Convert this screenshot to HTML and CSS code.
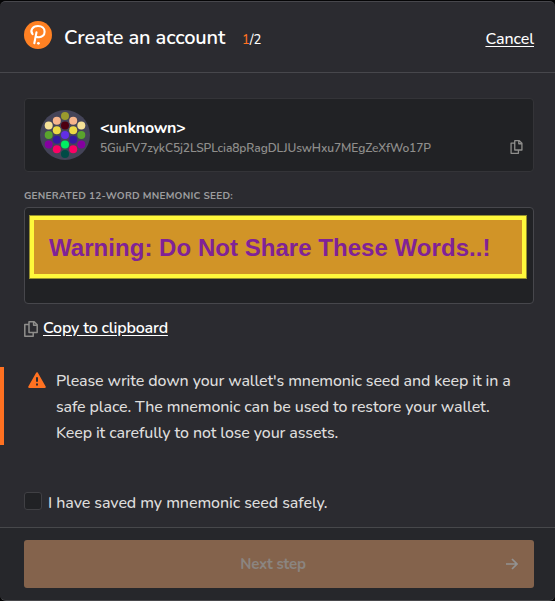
FILE: index.html
```
<!DOCTYPE html>
<html lang="en">
<head>
<meta charset="utf-8">
<title>Create an account</title>
<link rel="stylesheet" href="styles.css">
</head>
<body>
<main class="popup">
  <header class="header">
    <svg class="logo" viewBox="0 0 28 28"><circle cx="14" cy="14" r="14" fill="#ff8123"/><path d="M8.6 13.2C5.6 9.6 8.6 5 14 5c4 0 6.6 2.4 6.6 5.7 0 3.5-2.6 5.7-6 5.5l-1.3-.1M12.5 11.2 10.3 22.3" fill="none" stroke="#fff" stroke-width="2.1" stroke-linecap="round"/><circle cx="14.4" cy="22.3" r="1.4" fill="#fff"/></svg>
    <h1 class="title">Create an account</h1>
    <span class="steps"><span class="current">1</span>/2</span>
    <a class="cancel">Cancel</a>
  </header>
  <section class="content">
    <div class="account">
      <svg class="identicon" viewBox="-25 -25 50 50"><circle r="25" fill="#444458"/>
        <circle cy="-19" r="4" fill="#9a9a2d"/>
        <circle cx="-8.2" cy="-14.2" r="4" fill="#f6b58c"/><circle cx="8.2" cy="-14.2" r="4" fill="#f6b58c"/>
        <circle cx="-16.3" cy="-9.5" r="4" fill="#f5e197"/><circle cy="-9.5" r="4" fill="#4e0010"/><circle cx="16.3" cy="-9.5" r="4" fill="#f5e197"/>
        <circle cx="-8.2" cy="-4.7" r="4" fill="#ebda45"/><circle cx="8.2" cy="-4.7" r="4" fill="#ebda45"/>
        <circle cx="-16.3" r="4" fill="#5aa42d"/><circle r="4" fill="#622ee5"/><circle cx="16.3" r="4" fill="#5aa42d"/>
        <circle cx="-8.2" cy="4.7" r="4" fill="#321aa0"/><circle cx="8.2" cy="4.7" r="4" fill="#321aa0"/>
        <circle cx="-16.3" cy="9.5" r="4" fill="#8500a0"/><circle cy="9.5" r="4" fill="#00ee62"/><circle cx="16.3" cy="9.5" r="4" fill="#8500a0"/>
        <circle cx="-8.2" cy="14.2" r="4" fill="#fb0064"/><circle cx="8.2" cy="14.2" r="4" fill="#fb0064"/>
        <circle cy="19" r="4" fill="#004b46"/>
      </svg>
      <div class="identity"><div class="name">&lt;unknown&gt;</div><div class="address">5GiuFV7zykC5j2LSPLcia8pRagDLJUswHxu7MEgZeXfWo17P</div></div>
      <svg class="copy" viewBox="0 0 14 16"><path d="M5 .8h5.2l3 3v7.6H5zM9.6.8v3.5h3.6M5 3.5H.8v11.7h8.4v-3.8"/></svg>
    </div>
    <div class="label">GENERATED 12-WORD MNEMONIC SEED:</div>
    <div class="seed"><div class="redaction"><span>Warning: Do Not Share These Words..!</span></div></div>
    <div class="clipboard"><svg class="copy" viewBox="0 0 14 16"><path d="M5 .8h5.2l3 3v7.6H5zM9.6.8v3.5h3.6M5 3.5H.8v11.7h8.4v-3.8"/></svg><a class="copy-link">Copy to clipboard</a></div>
    <div class="warning">
      <svg class="alert" viewBox="0 0 18 16"><path d="M9 1.2 16.8 15H1.2z" fill="#ff7121" stroke="#ff7121" stroke-width="2" stroke-linejoin="round"/><path d="M9 5.2v4.5M9 11.6v2" stroke="#2b2b30" stroke-width="2"/></svg>
      <p class="advice"><span class="line">Please write down your wallet's mnemonic seed and keep it in a</span><span class="line">safe place. The mnemonic can be used to restore your wallet.</span><span class="line">Keep it carefully to not lose your assets.</span></p>
    </div>
    <div class="confirm"><span class="checkbox"></span><span class="confirm-text">I have saved my mnemonic seed safely.</span></div>
  </section>
  <footer class="footer"><div class="next"><span class="next-text">Next step</span><svg class="arrow" viewBox="0 0 12 12"><path d="M0 6h10.5M6 1l5 5-5 5"/></svg></div></footer>
</main>
</body>
</html>
```
FILE: styles.css
```
* { box-sizing: border-box; }
body { margin: 0; background: #050506; font-family: Nunito, Lato, sans-serif; color: #fff; }
.popup { height: 601px; border-top: 1px solid #050506; border-bottom: 1px solid #47484b; border-radius: 6px; background: #2b2b30; overflow: hidden; display: flex; flex-direction: column; white-space: nowrap; }
.header { height: 72px; flex: none; display: flex; align-items: center; padding: 0 21px 0 24px; border-top: 1px solid #47474c; border-bottom: 1px solid #47474c; border-radius: 5px 5px 0 0; }
.logo { width: 28px; height: 28px; margin-top: -4px; }
.title { margin: 2px 0 0 12px; width: 178px; font-size: 20px; line-height: 28px; font-weight: 600; letter-spacing: -.15px; }
.steps { font-size: 13px; line-height: 18px; padding-top: 6px; font-weight: 500; }
.current { color: #ff7121; }
.cancel { margin-left: auto; padding-top: 4px; font-size: 16px; line-height: 20px; font-weight: 500; letter-spacing: -.05px; text-decoration: underline; text-underline-offset: 2px; }
.content { height: 454px; flex: none; padding: 25px 21px 0 0; }
.account { height: 74px; margin-left: 24px; padding: 0 10px 0 15px; display: flex; align-items: center; background: #212225; border: 1px solid #343438; border-radius: 4px; }
.identicon { width: 50px; height: 50px; flex: none; }
.identity { margin-left: 10px; flex: 1; padding-top: 6px; }
.name { font-size: 16px; line-height: 20px; font-weight: 700; letter-spacing: -.25px; }
.address { font-size: 12px; line-height: 20px; font-weight: 600; letter-spacing: -.11px; color: #8f8e8c; }
.copy { width: 14px; height: 16px; flex: none; fill: none; stroke: #8f8e8c; stroke-width: 1.5; stroke-linejoin: round; }
.account .copy { width: 13px; height: 14px; margin-top: 24px; }
.label { margin: 17px 0 3px 24px; height: 15px; font-size: 10px; line-height: 15px; font-weight: 700; letter-spacing: .24px; color: #9d9d9f; }
.seed { height: 97px; margin-left: 24px; padding: 7px 6px 0 4px; border: 1px solid #47474c; border-radius: 4px; background: #212225; }
.redaction { height: 64px; padding: 14px 0 0 15px; border: 5px solid #fff83b; outline: 1px solid #96902e; outline-offset: -1px; background: #d19427; color: #802297; font: bold 24px/28px "Liberation Sans", sans-serif; letter-spacing: .04px; }
.clipboard { height: 20px; margin: 15px 0 0 24px; display: flex; align-items: center; gap: 5px; }
.copy-link { margin-top: -3px; font-size: 16px; line-height: 18px; font-weight: 600; letter-spacing: -.2px; text-decoration: underline; text-underline-offset: 2px; }
.warning { height: 78px; margin-top: 28px; padding-left: 24px; border-left: 4px solid #ff7121; display: flex; }
.alert { width: 18px; height: 16px; margin-top: 5px; }
.advice { margin: 1px 0 0 10px; font-size: 16px; line-height: 26px; font-weight: 500; letter-spacing: -.13px; color: #dedddc; }
.line { display: block; width: max-content; }
.confirm { height: 20px; margin: 46px 0 0 24px; display: flex; align-items: center; gap: 6px; font-size: 16px; font-weight: 500; letter-spacing: -.08px; color: #dedddc; }
.checkbox { width: 18px; height: 18px; border: 1px solid #404044; border-radius: 3px; background: #212225; }
.confirm-text { line-height: 20px; padding-top: 3px; }
.footer { flex: 1; padding: 12px 21px 0 24px; border-top: 1px solid #47484b; background: #26272b; }
.next { height: 48px; border-radius: 3px; background: #84634c; color: #8b8580; display: grid; grid-template-columns: 1fr auto; align-items: center; padding-right: 16px; }
.next-text { padding-left: 16px; text-align: center; font-size: 15px; font-weight: 700; line-height: 20px; letter-spacing: -.2px; }
.arrow { width: 12px; height: 12px; fill: none; stroke: #929291; stroke-width: 1.7; }
```
